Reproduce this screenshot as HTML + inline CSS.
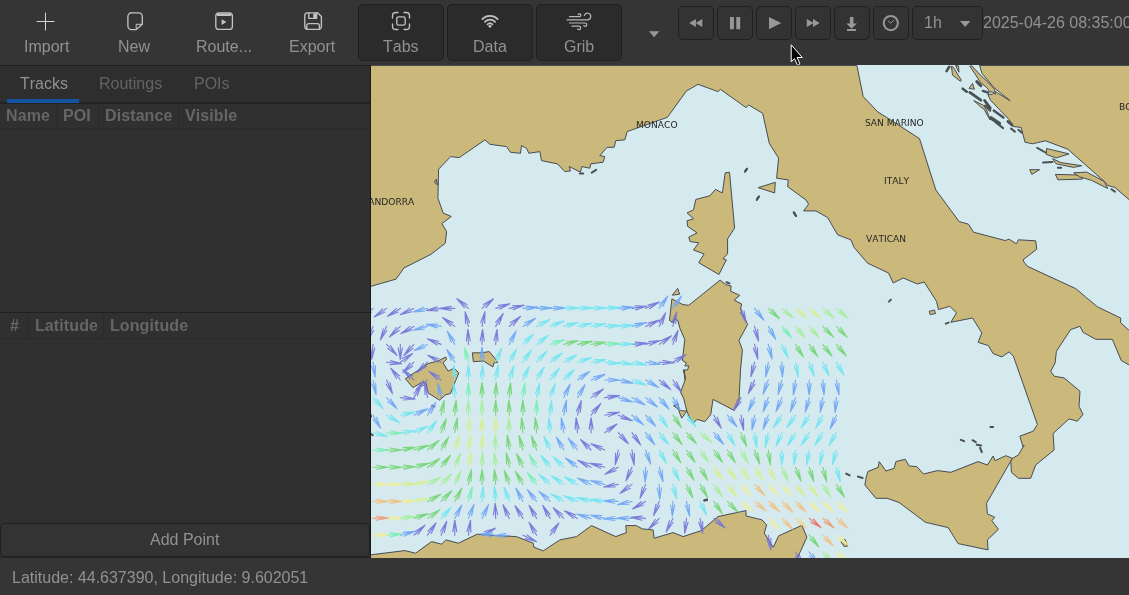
<!DOCTYPE html>
<html><head><meta charset="utf-8">
<style>
*{box-sizing:border-box;margin:0;padding:0}
html,body{width:1129px;height:595px;overflow:hidden;background:#353535}
body{font-kerning:none;font-family:"Liberation Sans",sans-serif;font-size:16px;color:#919190;position:relative}
.abs{position:absolute}
#hdr{left:0;top:0;width:1129px;height:65px;background:#353535}
#hdrline{left:0;top:65px;width:371px;height:1px;background:#202020}
.tb{position:absolute;top:0;height:65px;text-align:center}
.tb svg{position:absolute;top:13px;left:50%;margin-left:-8px}
.lbl{will-change:transform;position:absolute;white-space:nowrap;line-height:18px;height:18px;margin-top:1px}
.tog{position:absolute;top:4px;height:57px;width:86px;background:#2b2b2b;border:1px solid #202020;border-radius:5px}
.sb{position:absolute;top:6px;height:34px;width:36px;background:#333333;border:1px solid #202020;border-radius:5px}
#side{left:0;top:66px;width:370px;height:492px;background:#303030}
#nbh{left:0;top:66px;width:370px;height:38px;background:#2e2e2e;border-bottom:2px solid #222}
.th{will-change:transform;position:absolute;font-weight:bold;color:#666;white-space:nowrap;line-height:18px;margin-top:1px;letter-spacing:0.1px}
.vsep{position:absolute;width:1px;background:#2b2b2b}
.hsep{position:absolute;height:1px;background:#2b2b2b}
#map{left:371px;top:65px;width:758px;height:493px;background:#d5eaee;overflow:hidden}
#status{left:0;top:558px;width:1129px;height:37px;background:#353535}
</style></head><body>
<div id="hdr" class="abs"></div>
<div id="hdrline" class="abs"></div>

<!-- toolbar text buttons -->
<div class="lbl" style="left:24px;top:37px">Import</div>
<div class="lbl" style="left:118px;top:37px">New</div>
<div class="lbl" style="left:196px;top:37px">Route...</div>
<div class="lbl" style="left:289px;top:37px">Export</div>

<div class="tog" style="left:358px"></div>
<div class="tog" style="left:447px"></div>
<div class="tog" style="left:536px"></div>
<div class="lbl" style="left:383px;top:37px">Tabs</div>
<div class="lbl" style="left:473px;top:37px">Data</div>
<div class="lbl" style="left:564px;top:37px">Grib</div>

<div class="sb" style="left:678px"></div>
<div class="sb" style="left:717px"></div>
<div class="sb" style="left:756px"></div>
<div class="sb" style="left:795px"></div>
<div class="sb" style="left:834px"></div>
<div class="sb" style="left:873px"></div>
<div class="sb" style="left:912px;width:71px"></div>
<div class="lbl" style="left:924px;top:13px">1h</div>
<div class="lbl" style="left:983px;top:13px">2025-04-26 08:35:00</div>


<!-- icons -->
<svg class="abs" style="left:0;top:0" width="1129" height="66" viewBox="0 0 1129 66">
<g fill="none" stroke="#c2c2c2" stroke-width="1.35" stroke-linecap="round" stroke-linejoin="round">
<!-- plus -->
<path d="M37 21.5H54M45.5 13V30" stroke="#d6d6d6" stroke-width="1"/>
<!-- new -->
<path d="M131.5 12.8h7.2a3.6 3.6 0 0 1 3.6 3.6v7.8l-6 5.4h-4.8a3.6 3.6 0 0 1-3.6-3.6v-9.6a3.6 3.6 0 0 1 3.6-3.600z"/>
<path d="M136.2 29.3v-5h5.6" stroke-width="1"/>
<!-- route -->
<rect x="215.8" y="12.8" width="16.6" height="16.6" rx="3.2"/>
<path d="M217 14.7h14.200" stroke-width="2.6" stroke-linecap="butt"/>
<path d="M221.6 19.2l4.8 2.9-4.8 2.9z" fill="#c4c4c4" stroke="none"/>
<!-- save -->
<path d="M307.6 12.8h10l3.8 3.8v10.000a2.800 2.800 0 0 1-2.800 2.800h-11a2.800 2.800 0 0 1-2.800-2.800v-11a2.800 2.800 0 0 1 2.800-2.800z"/>
<path d="M308.800 13v5.400h7.800v-5.400M306.800 29.200v-3.600a2 2 0 0 1 2-2h8.600a2 2 0 0 1 2 2v3.600"/>
<path d="M313.300 13.400h2.700v4.600h-2.700z" fill="#c4c4c4" stroke="none"/>
<!-- tabs -->
<path d="M392.500 18v-2.200a3.300 3.300 0 0 1 3.300-3.300h2.200M404 12.500h2.200a3.300 3.300 0 0 1 3.300 3.300v2.200M409.500 24v2.200a3.300 3.300 0 0 1-3.300 3.300h-2.200M398 29.500h-2.200a3.300 3.300 0 0 1-3.300-3.300v-2.200"/>
<rect x="396.800" y="16.800" width="8.400" height="8.400" rx="1.800"/>
<!-- wifi -->
<path d="M482.300 19.100a11 11 0 0 1 15.400 0M484.900 21.800a7.300 7.300 0 0 1 10.200 0M487.500 24.400a3.600 3.600 0 0 1 5 0" stroke-width="1.750"/>
<circle cx="490" cy="26.300" r="1.450" fill="#c4c4c4" stroke="none"/>
<!-- wind -->
<g stroke="#b8b8b8" stroke-width="1.200">
<path d="M569.500 16.600h10a1.400 1.400 0 1 0-1.300-1.900"/>
<path d="M567 19.800h20.400a3.300 3.300 0 1 0-3.100-4.300"/>
<path d="M569.500 23h15.600a1.700 1.700 0 1 1-1.400 2.700"/>
<path d="M572 26.200h7a1.700 1.700 0 1 1-1.400 2.700"/>
</g>
</g>
<g fill="#989896">
<!-- dropdown -->
<path d="M649 31.200h10.300l-5.150 6z"/>
<!-- rewind -->
<path d="M689.200 23.100l6.700-4v8zM695.600 23.100l6.700-4v8z"/>
<!-- pause -->
<path d="M730 17h3.900v12.200h-3.900zM736.300 17h3.900v12.200h-3.900z"/>
<!-- play -->
<path d="M769 17l12.200 6.100-12.200 6.100z"/>
<!-- ff -->
<path d="M806.800 19.100l6.700 4-6.700 4zM813 19.100l6.700 4-6.700 4z"/>
<!-- download -->
<path d="M849.900 17h3.500v6.400h3.500l-5.250 5.400-5.250-5.400h3.500zM847 29.100h9v1.800h-9z"/>
<!-- combo arrow -->
<path d="M960 21h10.400l-5.200 6z"/>
</g>
<!-- clock -->
<circle cx="890.800" cy="23.100" r="7.100" fill="none" stroke="#989896" stroke-width="2"/>
<path d="M887.800 20.500l3 2.700 3.300-3.300" fill="none" stroke="#b0b0b0" stroke-width="0.800"/>
<!-- cursor -->
<path d="M791.200 44.800v17l3.300-3.200 2.600 5.600a1.300 1.300 0 0 0 2.500-1.100l-2.500-5.600h5.200z" fill="#000" stroke="#fff" stroke-width="1" stroke-linejoin="miter"/>
</svg>

<!-- sidebar -->
<div id="side" class="abs"></div>
<div id="nbh" class="abs"></div>
<div class="lbl" style="left:19.5px;top:74px;color:#919190">Tracks</div>
<div class="lbl" style="left:99px;top:74px;color:#646464">Routings</div>
<div class="lbl" style="left:194px;top:74px;color:#646464">POIs</div>
<div class="abs" style="left:7px;top:99px;width:72px;height:4px;background:#15539e"></div>

<div class="th" style="left:6px;top:106px">Name</div>
<div class="th" style="left:63px;top:106px">POI</div>
<div class="th" style="left:105px;top:106px">Distance</div>
<div class="th" style="left:185px;top:106px">Visible</div>
<div class="vsep" style="left:56px;top:103px;height:25px"></div>
<div class="vsep" style="left:98px;top:103px;height:25px"></div>
<div class="vsep" style="left:178px;top:103px;height:25px"></div>
<div class="hsep" style="left:0;top:128px;width:370px"></div>

<div class="abs" style="left:0;top:312px;width:370px;height:1px;background:#202020"></div>
<div class="th" style="left:10px;top:316px">#</div>
<div class="th" style="left:35px;top:316px">Latitude</div>
<div class="th" style="left:110px;top:316px">Longitude</div>
<div class="vsep" style="left:28px;top:313px;height:25px"></div>
<div class="vsep" style="left:103px;top:313px;height:25px"></div>
<div class="hsep" style="left:0;top:338px;width:370px"></div>

<div class="abs" style="left:0;top:523px;width:370px;height:34px;background:#333333;border:1px solid #202020;border-radius:5px"></div>
<div class="lbl" style="left:150px;top:530px">Add Point</div>
<div class="abs" style="left:0;top:557px;width:371px;height:1px;background:#222"></div>

<div class="abs" style="left:370px;top:66px;width:1px;height:492px;background:#1b1b1b"></div>

<!-- map -->
<div id="map" class="abs">
<svg id="mapsvg" width="758" height="493" viewBox="371 65 758 493">
<g fill="#cbb97b" stroke="#464c54" stroke-width="1" stroke-linejoin="round">
<path d="M366 287.7 L371 286.3 L396.1 279.1 L403.9 268 L431 254.3 L445.3 243.2 L446.6 231.5 L441.9 223.5 L451.3 216.5 L443.3 213.2 L437.9 198.2 L438.6 169.2 L450.6 156.6 L459.3 157.6 L484.9 139.9 L489.9 144.3 L506.5 146.6 L510.5 152.3 L520.5 153.3 L521.5 145.6 L526.5 148.3 L528.9 153.3 L539.8 151.6 L541.5 160.6 L557.5 163.9 L564.8 171.6 L570.5 170.9 L569.2 166.6 L580.5 172.2 L581.8 166.6 L589.8 168.2 L590.8 163.9 L603.1 162.2 L604.8 156.6 L599.8 155.6 L607.1 147.3 L614.1 147.3 L615.8 140.6 L624.8 139.9 L627.1 131.6 L667.4 117.3 L686.4 91 L698 84.3 L718 91.6 L720.4 89.3 L746 107.6 L748.7 105 L762.7 113.3 L769.3 143.3 L778.6 158.2 L776.6 178.2 L788.3 179.9 L787.6 186.6 L805.9 199.9 L808.6 204.2 L803.6 210.9 L815.9 210.9 L827.6 217.5 L837.6 234.8 L850.9 239.8 L854.2 247.5 L867.6 263.2 L888.5 273 L893.2 283 L903.2 278 L917.5 284 L924.2 282 L936.5 301.3 L938.5 309.6 L949.8 306.3 L956.5 313 L950.8 322.3 L972.5 318 L981.8 332.9 L978.1 342.3 L988.4 345.6 L993.1 353.6 L1001.8 356.9 L1009.1 351.9 L1013.4 356.2 L1037.4 424.5 L1033.1 431.2 L1019.8 436.2 L1023.1 446.8 L1024.1 445 L1018.4 455 L1012.4 458.3 L1010.8 461.6 L1011.4 472.3 L1018.4 478.3 L1030.7 478.3 L1035.7 465 L1054.1 450 L1054.1 449.5 L1053.1 433.5 L1057.4 429.5 L1069 418.9 L1077.4 421.2 L1083 414.5 L1079 406.2 L1080 391.2 L1064 377.9 L1054.1 376.2 L1050.7 371.2 L1055.1 362.9 L1056.4 351.3 L1070.7 329.6 L1080 326.3 L1083 332.3 L1095.7 339.3 L1112.3 339.3 L1121.3 360.6 L1129 364.9 L1145.6 372.9 L1145.6 334.6 L1129 330.3 L1120.5 322.6 L1120.8 318.1 L1097.4 306.8 L1085.7 297 L1075.7 288.6 L1027.4 266.3 L1024.1 262.2 L1023.1 259.8 L1036.7 249.2 L1035.7 240.8 L1018.4 239.8 L1016.4 243.8 L1009.1 239.2 L1005.1 240.5 L973.5 232.2 L968.5 224.2 L959.1 221.5 L935.8 189.9 L919.5 138.6 L891.2 120.3 L877.9 112 L863.2 96.6 L856.9 65.5 L366 65.5Z"/>
<path d="M979.6 65.5 L981.9 73.2 L993.7 87.4 L1010.2 100.8 L994.9 91.4 L992.5 94.4 L987.8 94.4 L990.6 100.3 L1009 119.6 L1013.7 126.6 L1021.2 127.4 L1025 142.2 L1032.5 143.8 L1045.5 140.8 L1067.8 149.2 L1105.5 182.6 L1107.8 185.5 L1114.9 187.4 L1129 199.6 L1133.7 203.8 L1135 205 L1135 65.5Z"/>
<path d="M366.7 555.2 L370 554.9 L405 550.6 L415.6 553.2 L431.6 541.6 L441.6 544.2 L445.9 539.9 L458.3 543.2 L477.2 534.2 L496.6 535.6 L516.5 536.6 L533.2 543.2 L533.9 547.2 L543.2 550.9 L559.8 539.9 L576.5 536.6 L591.5 525.6 L615.8 536.6 L626.4 532.6 L625.8 525.6 L636.4 525.6 L642.4 528.9 L653.1 529.9 L654.1 538.2 L673.1 532.6 L683.1 536.6 L701.4 530.6 L718 516.6 L746 510.6 L746 515.9 L762 519.9 L766.6 524.9 L764.3 533.2 L773.3 547.2 L778.6 535.9 L801.9 525.3 L806.9 537.2 L796.6 559.9 L746 559.9 L366 562Z"/>
<path d="M866.2 477.3 L867.9 471.6 L878.2 467.3 L879.2 461.6 L885.9 471 L894.2 468.3 L895.9 461.6 L905.2 459.3 L909.2 466 L916.8 466.6 L923.5 474 L937.5 470.6 L950.8 472.3 L978.1 461.6 L987.4 465 L993.1 456 L995.1 460.6 L1005.8 455.7 L1012.4 458.3 L986.5 503.3 L987.4 513.9 L994.8 517.3 L991.8 520.6 L998.4 529.3 L987.4 539.9 L988.1 549.9 L958.1 543.6 L948.2 527.6 L925.5 522.3 L899.2 502.6 L887.2 498.3 L875.9 498.3 L864.9 485Z"/>
<path d="M725.2 172.9 L729.5 172.2 L734.6 228.2 L727.6 238.8 L727.6 254 L722.9 258.7 L726.4 259.9 L718.9 274.5 L698.7 262.7 L704.1 254 L693.5 250 L698.7 242.8 L690 241.6 L688.8 237.1 L697 232.9 L687.6 226.3 L687.1 220.7 L693.5 218.8 L687.1 212.9 L693.5 209.8 L695.8 199.5 L710 195.7 L715.4 189.4 L722.4 192.9Z"/>
<path d="M758.2 187.7 L775.3 182.3 L774.6 192.9Z"/>
<path d="M720.1 280.1 L725.7 284.6 L731.1 286 L730.6 291.2 L739.8 295.4 L734.2 300.1 L741.7 304.1 L740.5 308.8 L747.6 324.5 L738.9 340.5 L742.4 349.9 L740.5 370 L738.9 401.7 L734.2 410.4 L713 399.4 L710.7 414.7 L704.8 421.7 L697 419.4 L693.5 422.9 L688.8 415.8 L686.9 411.1 L683.6 398.2 L680.6 392.3 L685.3 379.4 L684.1 370 L685.3 380 L683.4 369.9 L687.6 369.9 L688.8 365.9 L684.8 365.9 L686.4 362.9 L682.4 360.5 L684.8 339.4 L680.1 328.8 L677.7 320.1 L674.2 319.4 L673.5 322.9 L669.5 320.5 L671.9 298.9 L682.9 304.6 L688.8 305.3Z"/>
<path d="M672.3 295.2 L677.7 288.3 L679.6 294.2Z"/>
<path d="M673.5 405.7 L678.2 403.6 L678.7 409.5Z"/>
<path d="M686.9 411.1 L681.7 418.2 L678.7 410.4Z"/>
<path d="M405.4 378.7 L428.2 363.6 L438.8 360.6 L445.8 357 L446.5 359.4 L443 362.9 L448.2 371.1 L454.1 368.1 L458.8 372.8 L450.5 393.5 L445.8 394.7 L439.5 400.1 L428.2 393 L425.8 382.9 L422.3 382.2 L412.9 387.6Z"/>
<path d="M472.4 352.8 L481.6 352.8 L489.3 351.6 L496.4 360.1 L497.6 362.4 L494 362.9 L492.9 366.9 L483.4 361 L473.3 361.7Z"/>
<path d="M840.9 541.6 L844.9 539.2 L847.9 545.9 L844.2 546.6Z"/>
<path d="M929.2 311.3 L934.5 310 L935.5 313.6 L930.2 314.6Z"/>
<path d="M434.3 182.2 L436.3 179.2 L437.6 184.9Z"/>
<path d="M969.8 66.2 L971.8 65.8 L980.4 75.1 L987.4 81.6 L994.5 89.2 L995.5 94.3 L993 92.2 L989.4 91.7 L987.4 88.2 L980.4 82.2 L974.8 73.6Z"/>
<path d="M951.4 66.2 L953.1 67 L961.4 80.3 L960.6 81.4 L952.5 75.1Z"/>
<path d="M955.6 65.5 L958.5 65.8 L959 72.3 L957.2 69Z"/>
<path d="M969 88.5 L972.5 83.4 L974.4 89.2Z"/>
<path d="M973.8 100.6 L979.9 103.6 L983.6 105.4 L987 110.9 L990.1 119.8 L987.4 115.5 L984.4 109.6 L980.4 106.6Z"/>
<path d="M1046.6 148.5 L1069 153.9 L1056.1 157.9 L1046.2 154.4Z"/>
<path d="M1052.5 158.6 L1060.8 162.6 L1081.9 165.7 L1073.7 167.4 L1056.1 163.8Z"/>
<path d="M1029.7 169.7 L1039.6 169.7 L1031.8 174.4Z"/>
<path d="M1055.4 174.4 L1081.9 175.1 L1082.4 179.1 L1057.9 179.8Z"/>
<path d="M1073.7 172.8 L1086.6 172.1 L1104.3 181.5 L1107.8 188.5 L1091.4 180.3 L1079.6 176.8Z"/>
</g>
<g stroke="#4a4f52" stroke-width="2" stroke-linecap="round">
<path d="M996.1 122.6L1003.1 128.1"/>
<path d="M1007.8 121.5L1012.5 125.7"/>
<path d="M1010.9 128.5L1014.9 131.6"/>
<path d="M1018.4 129.7L1021.9 132.8"/>
<path d="M1037.2 147.8L1045.5 152.5"/>
<path d="M1043.1 162.6L1052.5 161.9"/>
<path d="M1057.9 167.8L1061.2 167.8"/>
<path d="M1111.4 189.2L1114.9 191.6"/>
<path d="M946.6 71.1L949.3 66.8" stroke-width="2.6"/>
<path d="M976.8 81.6L980.9 85.7" stroke-width="3"/>
<path d="M962.7 88.7L966.7 91.7" stroke-width="2.6"/>
<path d="M969.8 92.4L980.9 100.1" stroke-width="2.8"/>
<path d="M982.9 90.9L988.2 92.7" stroke-width="2.4"/>
<path d="M984.6 100.5L990.3 108.2" stroke-width="2.8"/>
<path d="M985.2 105.6L990.3 110.6" stroke-width="2.2"/>
<path d="M993.7 110.6L1003.4 117.5" stroke-width="2.4"/>
<path d="M991 118L999.3 123.5" stroke-width="3.6"/>
<path d="M1007.8 121.5L1011.6 124.5" stroke-width="2.6"/>
<path d="M757 199.2L758.7 196.9"/>
<path d="M794 212.5L796 215.9"/>
<path d="M745.3 170.9L747 168.9"/>
<path d="M888.9 301.6L890.9 299.6"/>
<path d="M945.8 323.6L948.5 322.6"/>
<path d="M990.4 426.9L993.1 426.9"/>
<path d="M960.8 439.8L964.1 441.2"/>
<path d="M972.5 440.2L975.8 442.2"/>
<path d="M976.8 444.8L981.1 445.5"/>
<path d="M980.1 447.8L981.8 452.2"/>
<path d="M745 171.8L746.9 168.7"/>
<path d="M756.7 200L758.9 196.4"/>
<path d="M793.7 212.4L796 216"/>
<path d="M726.4 282.3L729.5 283.4"/>
<path d="M579.8 173.6L583.1 173.6"/>
<path d="M591.8 172.6L596.1 169.9"/>
<path d="M432.2 405.7L434.5 406.4"/>
<path d="M704.4 500.3L707 500.3"/>
<path d="M846.2 473.6L849.6 475.3"/>
<path d="M857.9 476.6L862.6 478"/>
<path d="M370 412.9L371 416.9"/>
<path d="M370.7 433.8L372.7 435.2"/>
<path d="M704.3 500.5L706.9 499.3"/>
</g>
<g fill="none" stroke-width="1.15" stroke-linecap="round" opacity="0.9">
<path stroke="#7373d9" d="M373.0 308.4L361.2 317.6L368.9 309.0M361.2 317.6L371.4 312.2M373.0 326.4L367.9 340.5L369.9 329.1M367.9 340.5L373.7 330.5M373.0 344.4L371.7 359.3L370.7 347.8M371.7 359.3L374.7 348.1M386.6 308.4L374.3 317.0L382.5 308.8M374.3 317.0L384.9 312.1M386.6 326.4L380.3 340.0L383.3 328.8M380.3 340.0L386.9 330.5M386.6 344.4L396.9 355.4L387.6 348.4M396.9 355.4L390.5 345.6M386.6 362.2L401.6 363.6L390.0 364.6M401.6 363.6L390.4 360.6M386.6 380.0L392.5 393.8L386.2 384.1M392.5 393.8L389.9 382.5M400.3 308.4L387.5 316.3L396.2 308.6M387.5 316.3L398.3 312.0M400.3 326.4L389.5 336.9L396.3 327.5M389.5 336.9L399.1 330.4M400.3 344.4L400.3 359.4L398.2 348.0M400.3 359.4L402.3 348.0M400.3 362.2L412.5 353.6L404.3 361.8M412.5 353.6L402.0 358.5M400.3 380.0L390.8 368.3L399.6 376.0M390.8 368.3L396.4 378.5M400.3 397.6L415.2 399.0L403.6 400.0M415.2 399.0L404.0 396.0M413.9 308.4L400.3 314.7L409.8 308.1M400.3 314.7L411.5 311.7M413.9 326.4L400.8 333.7L409.8 326.4M400.8 333.7L411.7 329.9M413.9 344.4L403.9 355.5L410.0 345.7M403.9 355.5L413.0 348.4M413.9 362.2L402.9 372.5L409.9 363.2M402.9 372.5L412.6 366.2M413.9 380.0L402.9 369.8L412.6 376.1M402.9 369.8L409.9 379.0M413.9 397.6L421.4 384.7L417.4 395.6M421.4 384.7L413.9 393.5M413.9 535.2L425.0 525.2L417.9 534.4M425.0 525.2L415.2 531.4M427.5 362.2L416.7 372.7L423.5 363.3M416.7 372.7L426.3 366.2M427.5 380.0L416.0 389.6L423.5 380.8M416.0 389.6L426.1 383.8M427.5 397.6L424.7 382.9L428.8 393.8M424.7 382.9L424.9 394.5M427.5 535.2L436.1 523.0L431.2 533.5M436.1 523.0L427.9 531.2M441.1 308.4L426.3 310.5L437.3 306.9M426.3 310.5L437.9 310.9M441.1 344.4L427.2 338.8L438.6 341.2M427.2 338.8L437.1 344.9M441.1 362.2L427.8 355.4L438.9 358.8M427.8 355.4L437.0 362.4M441.1 380.0L428.9 371.4L439.4 376.3M428.9 371.4L437.1 379.6M441.1 535.2L446.8 521.3L444.4 532.7M446.8 521.3L440.6 531.2M454.8 308.4L439.8 308.4L451.2 306.4M439.8 308.4L451.2 310.4M454.8 326.4L442.6 317.6L453.1 322.7M442.6 317.6L450.7 326.0M454.8 535.2L454.8 520.2L456.8 531.7M454.8 520.2L452.8 531.7M468.4 308.4L456.9 298.8L467.0 304.6M456.9 298.8L464.4 307.6M468.4 326.4L465.0 311.8L469.6 322.5M465.0 311.8L465.6 323.4M468.4 344.4L467.9 329.4L470.3 340.8M467.9 329.4L466.3 340.9M468.4 535.2L470.5 520.4L470.9 532.0M470.5 520.4L466.9 531.4M482.0 308.4L493.5 298.8L486.1 307.6M493.5 298.8L483.5 304.6M482.0 326.4L484.9 311.7L484.7 323.3M484.9 311.7L480.7 322.6M482.0 344.4L482.6 329.4L484.2 340.9M482.6 329.4L480.2 340.8M482.0 535.2L495.3 528.2L486.1 535.3M495.3 528.2L484.3 531.8M495.7 308.4L509.9 303.8L499.7 309.2M509.9 303.8L498.4 305.4M495.7 326.4L503.2 313.5L499.2 324.4M503.2 313.5L495.7 322.3M495.7 344.4L497.0 329.5L498.0 341.0M497.0 329.5L494.0 340.7M495.7 518.4L495.1 503.4L497.6 514.8M495.1 503.4L493.5 514.9M509.3 308.4L524.0 305.3L513.2 309.6M524.0 305.3L512.4 305.7M509.3 326.4L520.4 316.4L513.3 325.6M520.4 316.4L510.6 322.6M509.3 518.4L503.0 504.8L509.6 514.3M503.0 504.8L506.0 516.0M522.9 518.4L515.0 505.7L522.7 514.3M515.0 505.7L519.3 516.4M522.9 535.2L536.5 541.6L525.3 538.6M536.5 541.6L527.0 534.9M536.6 518.4L529.1 505.4L536.5 514.3M529.1 505.4L533.0 516.3M536.6 535.2L529.1 522.3L536.5 531.1M529.1 522.3L533.0 533.2M550.2 518.4L542.7 505.4L550.1 514.3M542.7 505.4L546.7 516.3M550.2 535.2L558.8 523.0L553.9 533.5M558.8 523.0L550.6 531.2M563.8 518.4L553.2 507.8L562.7 514.4M553.2 507.8L559.9 517.3M577.5 415.2L581.3 400.7L580.3 412.3M581.3 400.7L576.4 411.2M577.5 432.7L576.1 417.7L579.1 428.9M576.1 417.7L575.1 429.3M577.5 518.4L564.5 510.9L575.4 514.9M564.5 510.9L573.3 518.4M591.1 397.6L603.4 389.0L595.2 397.2M603.4 389.0L592.9 393.9M591.1 415.2L600.7 403.7L594.9 413.8M600.7 403.7L591.8 411.2M591.1 432.7L591.1 417.7L593.1 429.1M591.1 417.7L589.1 429.1M591.1 450.0L580.5 439.4L590.0 446.0M580.5 439.4L587.1 448.9M591.1 467.2L577.8 460.2L588.9 463.8M577.8 460.2L587.0 467.3M604.7 397.6L619.6 395.6L608.5 399.1M619.6 395.6L608.0 395.2M604.7 415.2L619.4 412.3L608.6 416.5M619.4 412.3L607.8 412.5M604.7 432.7L617.0 424.0L608.8 432.2M617.0 424.0L606.5 428.9M604.7 450.0L591.1 443.7L602.3 446.7M591.1 443.7L600.6 450.3M604.7 467.2L590.2 463.4L601.8 464.4M590.2 463.4L600.7 468.3M618.3 415.2L632.2 420.8L620.9 418.4M632.2 420.8L622.4 414.7M618.3 432.7L628.4 443.8L619.2 436.7M628.4 443.8L622.2 434.0M618.3 450.0L615.2 464.7L615.6 453.1M615.2 464.7L619.6 453.9M618.3 467.2L605.0 474.1L614.2 467.1M605.0 474.1L616.1 470.7M618.3 484.4L603.6 487.0L614.5 483.0M603.6 487.0L615.2 487.0M632.0 308.4L646.8 306.3L635.8 309.9M646.8 306.3L635.2 305.9M632.0 344.4L646.9 343.1L635.7 346.1M646.9 343.1L635.4 342.1M632.0 432.7L640.6 444.9L632.4 436.7M640.6 444.9L635.7 434.4M632.0 450.0L634.1 464.9L630.5 453.8M634.1 464.9L634.5 453.3M632.0 467.2L625.9 481.0L628.7 469.7M625.9 481.0L632.4 471.3M632.0 484.4L620.0 493.4L627.9 484.9M620.0 493.4L630.3 488.2M645.6 308.4L659.2 302.1L649.7 308.7M659.2 302.1L648.0 305.1M645.6 326.4L659.2 320.1L649.7 326.8M659.2 320.1L648.0 323.1M645.6 344.4L660.1 340.5L649.6 345.4M660.1 340.5L648.5 341.5M645.6 484.4L640.0 498.3L642.4 487.0M640.0 498.3L646.1 488.5M645.6 501.4L632.6 508.9L641.5 501.5M632.6 508.9L643.5 505.0M645.6 518.4L630.6 517.4L642.2 516.1M630.6 517.4L641.9 520.2M659.2 326.4L665.6 312.9L662.6 324.1M665.6 312.9L658.9 322.4M659.2 344.4L671.5 335.8L663.3 344.0M671.5 335.8L661.0 340.7M659.2 362.2L674.2 362.8L662.7 364.4M674.2 362.8L662.9 360.4M659.2 380.0L670.7 389.6L660.7 383.8M670.7 389.6L663.3 380.8M659.2 501.4L653.6 515.4L656.0 504.0M653.6 515.4L659.8 505.5M659.2 518.4L648.6 529.0L655.3 519.5M648.6 529.0L658.1 522.4M672.9 326.4L676.7 312.0L675.7 323.5M676.7 312.0L671.8 322.5M672.9 344.4L678.0 330.3L676.0 341.7M678.0 330.3L672.2 340.4M672.9 362.2L685.9 354.8L677.0 362.2M685.9 354.8L674.9 358.7M672.9 380.0L681.5 392.3L673.3 384.1M681.5 392.3L676.6 381.8M672.9 518.4L666.1 531.8L669.4 520.7M666.1 531.8L673.0 522.5M686.5 518.4L684.7 533.3L684.1 521.7M684.7 533.3L688.1 522.2M700.1 518.4L702.7 533.2L698.8 522.3M702.7 533.2L702.7 521.6M713.8 415.2L721.2 428.2L713.8 419.3M721.2 428.2L717.3 417.3M713.8 518.4L725.2 528.0L715.2 522.2M725.2 528.0L717.8 519.2M741.0 308.4L746.1 322.5L740.3 312.4M746.1 322.5L744.1 311.1M741.0 397.6L733.5 410.6L737.5 399.7M733.5 410.6L741.0 401.8M741.0 415.2L743.6 430.0L739.6 419.1M743.6 430.0L743.6 418.4M754.6 326.4L758.5 340.9L753.6 330.4M758.5 340.9L757.5 329.4M754.6 344.4L757.8 359.1L753.4 348.3M757.8 359.1L757.4 347.5M754.6 362.2L750.8 376.7L751.8 365.2M750.8 376.7L755.7 366.2M754.6 380.0L748.3 393.6L751.3 382.4M748.3 393.6L755.0 384.1M768.3 535.2L770.9 550.0L766.9 539.1M770.9 550.0L770.9 538.4M795.5 552.0L803.0 565.0L795.6 556.1M803.0 565.0L799.1 554.1"/>
<path stroke="#6ea5f7" d="M373.0 362.2L375.1 377.1L371.5 366.1M375.1 377.1L375.5 365.5M373.0 380.0L376.1 394.7L371.8 383.9M376.1 394.7L375.7 383.1M373.0 415.2L380.5 428.2L373.0 419.3M380.5 428.2L376.5 417.3M386.6 397.6L396.9 408.6L387.6 401.6M396.9 408.6L390.5 398.9M400.3 535.2L414.7 531.4L404.2 536.3M414.7 531.4L403.2 532.4M413.9 415.2L427.5 408.9L418.0 415.5M427.5 408.9L416.3 411.9M427.5 308.4L413.0 312.0L423.6 307.3M413.0 312.0L424.5 311.2M427.5 326.4L413.0 330.3L423.5 325.4M413.0 330.3L424.6 329.3M427.5 344.4L413.9 350.7L423.4 344.1M413.9 350.7L425.1 347.7M427.5 415.2L435.7 402.6L431.2 413.3M435.7 402.6L427.8 411.1M441.1 326.4L426.3 324.4L437.9 324.0M426.3 324.4L437.3 327.9M441.1 397.6L437.8 383.0L442.3 393.7M437.8 383.0L438.4 394.6M454.8 344.4L447.3 331.4L454.7 340.3M447.3 331.4L451.2 342.3M454.8 362.2L446.8 349.5L454.6 358.1M446.8 349.5L451.2 360.3M454.8 518.4L461.8 505.2L458.2 516.2M461.8 505.2L454.7 514.3M468.4 518.4L474.0 504.5L471.6 515.8M474.0 504.5L467.9 514.3M482.0 362.2L482.0 347.2L484.1 358.7M482.0 347.2L480.0 358.7M482.0 518.4L488.4 504.8L485.4 516.0M488.4 504.8L481.7 514.3M495.7 535.2L480.7 533.9L492.3 532.9M480.7 533.9L491.9 536.9M509.3 344.4L516.1 331.0L512.7 342.1M516.1 331.0L509.1 340.3M509.3 535.2L494.3 535.8L505.7 533.4M494.3 535.8L505.8 537.4M522.9 308.4L537.9 307.1L526.7 310.1M537.9 307.1L526.3 306.1M522.9 326.4L535.5 318.3L527.0 326.2M535.5 318.3L524.8 322.8M522.9 501.4L515.9 488.2L523.0 497.3M515.9 488.2L519.5 499.2M536.6 308.4L551.6 307.9L540.2 310.3M551.6 307.9L540.1 306.3M536.6 501.4L527.3 489.6L535.9 497.4M527.3 489.6L532.8 499.9M550.2 308.4L565.2 307.9L553.8 310.3M565.2 307.9L553.7 306.3M550.2 501.4L539.0 491.4L548.9 497.6M539.0 491.4L546.2 500.6M563.8 397.6L570.2 384.1L567.2 395.3M570.2 384.1L563.5 393.6M563.8 415.2L566.4 400.4L566.4 412.0M566.4 400.4L562.5 411.3M563.8 432.7L561.2 417.9L565.2 428.8M561.2 417.9L561.2 429.5M563.8 450.0L556.3 437.0L563.8 445.9M556.3 437.0L560.3 447.9M577.5 380.0L589.7 371.4L581.5 379.6M589.7 371.4L579.2 376.3M577.5 397.6L585.0 384.7L581.0 395.6M585.0 384.7L577.5 393.5M577.5 450.0L568.2 438.2L576.8 445.9M568.2 438.2L573.7 448.4M577.5 467.2L565.6 458.0L575.9 463.5M565.6 458.0L573.4 466.6M591.1 380.0L605.0 374.4L595.2 380.5M605.0 374.4L593.6 376.8M591.1 484.4L577.5 478.1L588.7 481.1M577.5 478.1L587.0 484.7M591.1 518.4L576.7 514.0L588.2 515.4M576.7 514.0L587.1 519.3M604.7 380.0L619.7 380.0L608.3 382.0M619.7 380.0L608.3 378.0M604.7 484.4L590.2 480.5L601.8 481.5M590.2 480.5L600.7 485.4M604.7 518.4L590.1 515.0L601.7 515.6M590.1 515.0L600.8 519.6M618.3 308.4L633.3 307.1L622.1 310.1M633.3 307.1L621.7 306.1M618.3 380.0L633.0 383.1L621.4 382.7M633.0 383.1L622.3 378.8M618.3 397.6L632.7 402.0L621.2 400.6M632.7 402.0L622.3 396.8M618.3 501.4L603.3 500.9L614.8 499.3M603.3 500.9L614.7 503.3M618.3 518.4L603.3 518.9L614.7 516.5M603.3 518.9L614.8 520.5M632.0 326.4L646.5 322.6L635.9 327.5M646.5 322.6L634.9 323.6M632.0 397.6L645.1 404.9L634.1 401.1M645.1 404.9L636.1 397.6M632.0 415.2L643.5 424.8L633.4 419.0M643.5 424.8L636.0 416.0M632.0 501.4L617.4 504.8L628.0 500.3M617.4 504.8L628.9 504.2M632.0 518.4L617.0 518.1L628.4 516.3M617.0 518.1L628.4 520.4M645.6 362.2L660.5 364.3L648.9 364.7M660.5 364.3L649.4 360.8M645.6 380.0L658.6 387.5L647.7 383.5M658.6 387.5L649.7 380.0M645.6 397.6L657.4 406.9L647.2 401.4M657.4 406.9L649.7 398.3M645.6 415.2L655.8 426.2L646.6 419.2M655.8 426.2L649.5 416.4M645.6 432.7L654.6 444.6L646.1 436.7M654.6 444.6L649.4 434.3M645.6 450.0L650.7 464.1L644.9 454.0M650.7 464.1L648.7 452.7M645.6 467.2L645.1 482.2L643.5 470.8M645.1 482.2L647.5 470.9M659.2 308.4L667.8 296.1L662.9 306.6M667.8 296.1L659.6 304.3M659.2 397.6L668.9 409.1L660.0 401.7M668.9 409.1L663.1 399.1M659.2 467.2L663.1 481.7L658.2 471.2M663.1 481.7L662.1 470.2M659.2 484.4L659.8 499.4L657.3 488.0M659.8 499.4L661.4 487.9M672.9 308.4L681.5 296.1L676.6 306.6M681.5 296.1L673.3 304.3M672.9 397.6L680.4 410.6L672.9 401.8M680.4 410.6L676.4 399.7M672.9 501.4L672.3 516.4L670.7 505.0M672.3 516.4L674.7 505.1M686.5 501.4L689.6 516.1L685.3 505.4M689.6 516.1L689.2 504.5M713.8 432.7L723.4 444.1L714.5 436.7M723.4 444.1L717.6 434.1M727.4 415.2L737.0 426.7L728.1 419.2M737.0 426.7L731.2 416.6M754.6 308.4L763.9 320.2L755.3 312.5M763.9 320.2L758.4 310.0M754.6 397.6L748.3 411.2L751.3 400.0M748.3 411.2L755.0 401.7M754.6 415.2L752.0 430.0L752.0 418.4M752.0 430.0L756.0 419.1M768.3 326.4L775.8 339.4L768.3 330.6M775.8 339.4L771.8 328.5M768.3 344.4L772.2 358.9L767.2 348.4M772.2 358.9L771.1 347.3M768.3 362.2L765.7 377.0L765.7 365.4M765.7 377.0L769.6 366.1M768.3 380.0L763.1 394.1L765.2 382.7M763.1 394.1L768.9 384.0M768.3 397.6L763.1 411.7L765.2 400.3M763.1 411.7L768.9 401.7M768.3 415.2L763.1 429.3L765.2 417.9M763.1 429.3L768.9 419.2M781.9 362.2L782.4 377.2L780.0 365.9M782.4 377.2L784.0 365.8M781.9 380.0L778.0 394.5L779.0 382.9M778.0 394.5L782.9 384.0M781.9 397.6L776.0 411.5L778.6 400.2M776.0 411.5L782.4 401.7M795.5 380.0L793.4 394.9L793.0 383.3M793.4 394.9L797.0 383.8M795.5 397.6L790.4 411.7L792.4 400.3M790.4 411.7L796.2 401.7M809.2 380.0L809.2 395.0L807.1 383.6M809.2 395.0L811.2 383.6M809.2 397.6L805.3 412.1L806.3 400.6M805.3 412.1L810.2 401.6M809.2 552.0L817.8 564.3L809.6 556.1M817.8 564.3L812.9 553.8M822.8 380.0L824.1 394.9L821.1 383.7M824.1 394.9L825.1 383.4M822.8 397.6L820.2 412.4L820.2 400.8M820.2 412.4L824.2 401.5M836.4 380.0L839.0 394.8L835.1 383.9M839.0 394.8L839.0 383.2M836.4 397.6L835.1 412.6L834.1 401.0M835.1 412.6L838.1 401.4M836.4 415.2L830.1 428.8L833.1 417.6M830.1 428.8L836.7 419.3"/>
<path stroke="#6ee6f2" d="M373.0 397.6L383.2 408.6L374.0 401.6M383.2 408.6L376.9 398.9M373.0 432.7L387.5 436.5L375.9 435.5M387.5 436.5L377.0 431.6M386.6 415.2L399.6 422.7L388.7 418.7M399.6 422.7L390.7 415.2M400.3 415.2L414.9 412.1L404.2 416.4M414.9 412.1L403.3 412.5M400.3 432.7L415.1 430.8L404.1 434.2M415.1 430.8L403.6 430.2M413.9 432.7L427.5 426.3L418.0 433.0M427.5 426.3L416.3 429.3M427.5 432.7L436.5 420.7L431.3 431.0M436.5 420.7L428.1 428.6M441.1 518.4L451.2 507.3L445.0 517.1M451.2 507.3L442.0 514.4M454.8 380.0L453.5 365.1L456.5 376.3M453.5 365.1L452.5 376.6M454.8 397.6L453.5 382.7L456.5 393.9M453.5 382.7L452.5 394.3M468.4 380.0L468.4 365.0L470.4 376.4M468.4 365.0L466.4 376.4M482.0 380.0L482.6 365.0L484.2 376.5M482.6 365.0L480.2 376.4M482.0 501.4L483.3 486.5L484.4 498.1M483.3 486.5L480.3 497.7M495.7 362.2L501.5 348.4L498.9 359.7M501.5 348.4L495.2 358.2M495.7 380.0L498.3 365.2L498.3 376.8M498.3 365.2L494.3 376.1M495.7 501.4L494.4 486.5L497.4 497.7M494.4 486.5L493.4 498.1M509.3 362.2L516.6 349.1L512.8 360.1M516.6 349.1L509.3 358.1M509.3 380.0L513.9 365.7L512.3 377.2M513.9 365.7L508.5 376.0M509.3 501.4L504.2 487.4L510.0 497.4M504.2 487.4L506.2 498.8M522.9 344.4L533.7 334.0L526.9 343.4M533.7 334.0L524.1 340.5M522.9 362.2L531.5 350.0L526.6 360.5M531.5 350.0L523.3 358.2M522.9 380.0L529.3 366.4L526.3 377.6M529.3 366.4L522.6 375.9M536.6 326.4L549.9 319.6L540.7 326.6M549.9 319.6L538.8 323.0M536.6 344.4L548.4 335.2L540.6 343.8M548.4 335.2L538.1 340.6M536.6 362.2L546.8 351.3L540.5 361.0M546.8 351.3L537.5 358.3M536.6 380.0L544.1 367.0L540.1 377.9M544.1 367.0L536.6 375.9M536.6 397.6L539.7 383.0L539.3 394.6M539.7 383.0L535.3 393.7M550.2 326.4L564.2 321.1L554.3 327.0M564.2 321.1L552.8 323.3M550.2 362.2L562.0 353.0L554.2 361.6M562.0 353.0L551.8 358.5M550.2 380.0L559.4 368.2L554.0 378.4M559.4 368.2L550.8 375.9M550.2 397.6L555.3 383.6L553.3 395.0M555.3 383.6L549.5 393.6M550.2 415.2L551.5 400.3L552.5 411.8M551.5 400.3L548.5 411.5M550.2 432.7L548.9 417.7L551.9 428.9M548.9 417.7L547.9 429.3M550.2 450.0L543.9 436.4L550.5 445.9M543.9 436.4L546.9 447.6M550.2 467.2L541.0 455.4L549.6 463.2M541.0 455.4L546.4 465.7M550.2 484.4L539.0 474.4L548.9 480.5M539.0 474.4L546.2 483.5M563.8 308.4L578.8 307.9L567.5 310.3M578.8 307.9L567.3 306.3M563.8 326.4L578.3 322.6L567.8 327.5M578.3 322.6L566.8 323.6M563.8 362.2L576.8 354.8L567.9 362.2M576.8 354.8L565.9 358.7M563.8 380.0L574.4 369.4L567.8 378.9M574.4 369.4L564.9 376.0M563.8 467.2L553.2 456.6L562.7 463.3M553.2 456.6L559.9 466.1M563.8 484.4L551.5 475.8L562.0 480.7M551.5 475.8L559.7 484.0M563.8 501.4L550.8 493.9L561.7 497.9M550.8 493.9L559.7 501.4M577.5 308.4L592.4 307.9L581.1 310.3M592.4 307.9L581.0 306.3M577.5 326.4L592.1 323.3L581.4 327.7M592.1 323.3L580.5 323.7M577.5 362.2L591.7 357.6L581.5 363.1M591.7 357.6L580.2 359.2M577.5 484.4L564.5 476.9L575.4 480.9M564.5 476.9L573.3 484.4M577.5 501.4L563.6 495.6L574.9 498.2M563.6 495.6L573.4 501.9M591.1 308.4L606.1 307.9L594.7 310.3M606.1 307.9L594.6 306.3M591.1 326.4L605.9 323.8L595.0 327.8M605.9 323.8L594.3 323.8M591.1 362.2L605.9 359.6L595.0 363.6M605.9 359.6L594.3 359.6M591.1 501.4L576.6 497.6L588.1 498.6M576.6 497.6L587.1 502.5M604.7 308.4L619.7 307.4L608.4 310.2M619.7 307.4L608.1 306.1M604.7 326.4L619.7 325.4L608.4 328.2M619.7 325.4L608.1 324.2M604.7 362.2L619.7 363.6L608.1 364.6M619.7 363.6L608.4 360.6M604.7 501.4L589.9 499.4L601.4 499.0M589.9 499.4L600.9 502.9M618.3 326.4L633.3 325.1L622.1 328.1M633.3 325.1L621.7 324.1M618.3 344.4L633.3 343.9L622.0 346.3M633.3 343.9L621.8 342.3M618.3 362.2L633.2 364.6L621.6 364.8M633.2 364.6L622.2 360.8M632.0 362.2L646.7 364.9L635.1 364.9M646.7 364.9L635.8 360.9M632.0 380.0L646.1 385.1L634.6 383.1M646.1 385.1L636.0 379.3M659.2 415.2L667.8 427.5L659.6 419.3M667.8 427.5L662.9 417.0M659.2 432.7L668.5 444.5L659.8 436.7M668.5 444.5L663.0 434.2M659.2 450.0L666.3 463.2L659.1 454.1M666.3 463.2L662.7 452.2M672.9 467.2L679.2 480.8L672.5 471.3M679.2 480.8L676.2 469.6M672.9 484.4L676.7 498.9L671.8 488.4M676.7 498.9L675.7 487.3M686.5 415.2L696.1 426.7L687.2 419.2M696.1 426.7L690.3 416.6M700.1 501.4L706.5 515.0L699.8 505.5M706.5 515.0L703.5 503.8M727.4 432.7L734.9 445.6L727.4 436.8M734.9 445.6L730.9 434.7M754.6 432.7L756.7 447.5L753.1 436.5M756.7 447.5L757.1 435.9M768.3 432.7L765.2 447.3L765.6 435.7M765.2 447.3L769.5 436.6M781.9 344.4L788.2 358.0L781.6 348.5M788.2 358.0L785.2 346.8M781.9 415.2L773.3 427.5L778.2 417.0M773.3 427.5L781.5 419.3M781.9 432.7L776.0 446.5L778.6 435.2M776.0 446.5L782.4 436.7M781.9 450.0L781.9 465.0L779.9 453.6M781.9 465.0L783.9 453.6M795.5 362.2L798.1 377.0L794.2 366.1M798.1 377.0L798.1 365.4M795.5 415.2L786.9 427.5L791.8 417.0M786.9 427.5L795.1 419.3M795.5 432.7L787.6 445.4L791.9 434.6M787.6 445.4L795.3 436.8M795.5 450.0L794.0 464.9L793.2 453.3M794.0 464.9L797.2 453.8M809.2 362.2L814.3 376.3L808.5 366.3M814.3 376.3L812.3 364.9M809.2 415.2L801.2 427.9L805.6 417.2M801.2 427.9L809.0 419.3M809.2 432.7L801.2 445.4L805.6 434.6M801.2 445.4L809.0 436.8M809.2 450.0L806.6 464.8L806.6 453.2M806.6 464.8L810.5 453.9M822.8 362.2L829.1 375.8L822.5 366.3M829.1 375.8L826.1 364.6M822.8 415.2L815.7 428.4L819.3 417.4M815.7 428.4L822.9 419.3M822.8 432.7L814.8 445.4L819.2 434.6M814.8 445.4L822.6 436.8M822.8 450.0L819.7 464.7L820.1 453.1M819.7 464.7L824.0 453.9M836.4 362.2L843.9 375.2L836.5 366.4M843.9 375.2L840.0 364.3M836.4 432.7L828.9 445.6L832.9 434.7M828.9 445.6L836.4 436.8M836.4 450.0L832.5 464.5L833.5 452.9M832.5 464.5L837.4 454.0M836.4 467.2L840.3 481.7L835.4 471.2M840.3 481.7L839.3 470.2"/>
<path stroke="#76f0b4" d="M373.0 450.0L388.0 450.0L376.6 452.0M388.0 450.0L376.6 448.0M386.6 432.7L401.6 433.4L390.1 434.8M401.6 433.4L390.3 430.8M386.6 535.2L401.6 533.9L390.4 536.9M401.6 533.9L390.0 532.9M468.4 362.2L464.5 347.8L469.4 358.3M464.5 347.8L465.5 359.3M468.4 397.6L468.4 382.6L470.4 394.1M468.4 382.6L466.4 394.1M468.4 501.4L472.3 487.0L471.3 498.5M472.3 487.0L467.4 497.5M522.9 397.6L525.0 382.8L525.4 394.4M525.0 382.8L521.4 393.8M536.6 415.2L536.6 400.2L538.6 411.6M536.6 400.2L534.5 411.6M536.6 467.2L529.1 454.3L536.5 463.1M529.1 454.3L533.0 465.2M536.6 484.4L527.3 472.6L535.9 480.3M527.3 472.6L532.8 482.8M550.2 344.4L564.5 339.8L554.2 345.2M564.5 339.8L553.0 341.4M604.7 344.4L619.7 343.4L608.4 346.2M619.7 343.4L608.1 342.1M781.9 326.4L791.5 337.9L782.7 330.5M791.5 337.9L785.7 327.9"/>
<path stroke="#72d672" d="M373.0 467.2L388.0 467.2L376.6 469.3M388.0 467.2L376.6 465.2M386.6 450.0L401.6 450.0L390.2 452.0M401.6 450.0L390.2 448.0M386.6 467.2L401.6 467.2L390.2 469.3M401.6 467.2L390.2 465.2M400.3 450.0L415.0 447.4L404.1 451.4M415.0 447.4L403.4 447.4M400.3 467.2L415.3 466.7L403.9 469.1M415.3 466.7L403.8 465.1M413.9 450.0L428.2 445.4L417.9 450.8M428.2 445.4L416.7 447.0M413.9 467.2L428.4 463.4L417.9 468.3M428.4 463.4L416.8 464.4M413.9 518.4L428.2 513.8L417.9 519.2M428.2 513.8L416.7 515.4M427.5 450.0L439.0 440.4L431.6 449.2M439.0 440.4L429.0 446.2M427.5 467.2L439.8 458.6L431.6 466.8M439.8 458.6L429.3 463.5M427.5 501.4L440.8 494.4L431.6 501.5M440.8 494.4L429.7 498.0M427.5 518.4L439.8 509.8L431.6 518.0M439.8 509.8L429.3 514.7M441.1 415.2L444.3 400.5L443.9 412.1M444.3 400.5L439.9 411.3M441.1 432.7L446.3 418.6L444.3 430.0M446.3 418.6L440.5 428.6M441.1 450.0L448.6 437.0L444.7 447.9M448.6 437.0L441.2 445.9M441.1 467.2L450.4 455.4L444.9 465.7M450.4 455.4L441.8 463.2M441.1 501.4L451.8 490.8L445.1 500.3M451.8 490.8L442.3 497.5M454.8 415.2L456.1 400.3L457.1 411.8M456.1 400.3L453.1 411.5M454.8 432.7L457.4 417.9L457.4 429.5M457.4 417.9L453.4 428.8M454.8 501.4L461.8 488.2L458.2 499.2M461.8 488.2L454.7 497.3M468.4 484.4L471.5 469.7L471.1 481.3M471.5 469.7L467.2 480.5M482.0 397.6L482.0 382.6L484.1 394.1M482.0 382.6L480.0 394.1M482.0 484.4L482.0 469.4L484.1 480.8M482.0 469.4L480.0 480.8M495.7 397.6L496.2 382.7L497.8 394.1M496.2 382.7L493.8 394.0M495.7 415.2L495.7 400.2L497.7 411.6M495.7 400.2L493.7 411.6M495.7 484.4L494.4 469.5L497.4 480.7M494.4 469.5L493.4 481.0M509.3 397.6L510.6 382.7L511.6 394.3M510.6 382.7L507.6 393.9M509.3 415.2L508.8 400.2L511.2 411.6M508.8 400.2L507.2 411.7M509.3 450.0L507.2 435.1L510.8 446.2M507.2 435.1L506.8 446.7M509.3 467.2L506.2 452.6L510.5 463.3M506.2 452.6L506.6 464.2M509.3 484.4L504.2 470.3L510.0 480.4M504.2 470.3L506.2 481.7M522.9 415.2L522.9 400.2L524.9 411.6M522.9 400.2L520.9 411.6M522.9 432.7L521.6 417.7L524.6 428.9M521.6 417.7L520.6 429.3M522.9 450.0L519.0 435.5L524.0 446.0M519.0 435.5L520.1 447.1M522.9 467.2L516.6 453.7L523.2 463.2M516.6 453.7L519.6 464.9M522.9 484.4L515.4 471.4L522.9 480.3M515.4 471.4L519.4 482.3M536.6 432.7L535.3 417.7L538.3 428.9M535.3 417.7L534.2 429.3M536.6 450.0L531.4 435.9L537.2 446.0M531.4 435.9L533.4 447.3M563.8 344.4L578.3 340.5L567.8 345.4M578.3 340.5L566.8 341.5M577.5 344.4L592.1 341.3L581.4 345.6M592.1 341.3L580.5 341.7M591.1 344.4L605.9 342.3L594.9 345.9M605.9 342.3L594.3 341.9M672.9 415.2L681.5 427.5L673.3 419.3M681.5 427.5L676.6 417.0M672.9 432.7L682.1 444.5L673.5 436.7M682.1 444.5L676.6 434.2M672.9 450.0L680.8 462.7L673.0 454.1M680.8 462.7L676.5 452.0M686.5 432.7L696.5 443.8L687.4 436.7M696.5 443.8L690.4 434.0M686.5 450.0L695.1 462.3L686.9 454.1M695.1 462.3L690.2 451.8M686.5 467.2L694.0 480.2L686.5 471.4M694.0 480.2L690.0 469.3M686.5 484.4L692.8 498.0L686.2 488.5M692.8 498.0L689.8 486.8M700.1 467.2L707.6 480.2L700.2 471.4M707.6 480.2L703.7 469.3M700.1 484.4L707.6 497.4L700.2 488.5M707.6 497.4L703.7 486.5M713.8 450.0L722.4 462.3L714.2 454.1M722.4 462.3L717.5 451.8M713.8 501.4L722.4 513.7L714.2 505.5M722.4 513.7L717.5 503.2M727.4 450.0L735.3 462.7L727.6 454.1M735.3 462.7L731.0 452.0M727.4 501.4L738.0 512.1L728.5 505.4M738.0 512.1L731.3 502.6M741.0 432.7L746.6 446.6L740.5 436.7M746.6 446.6L744.2 435.2M754.6 450.0L759.8 464.1L754.0 454.0M759.8 464.1L757.8 452.7M768.3 308.4L779.4 318.4L769.6 312.3M779.4 318.4L772.3 309.3M768.3 450.0L770.4 464.9L766.8 453.8M770.4 464.9L770.8 453.3M795.5 344.4L803.5 357.1L795.7 348.5M803.5 357.1L799.1 346.4M795.5 467.2L801.1 481.2L795.0 471.3M801.1 481.2L798.7 469.8M809.2 344.4L817.8 356.7L809.6 348.5M817.8 356.7L812.9 346.2M809.2 467.2L813.8 481.5L808.3 471.3M813.8 481.5L812.2 470.0M809.2 535.2L818.8 546.7L809.9 539.3M818.8 546.7L813.0 536.7M822.8 326.4L833.4 337.1L823.9 330.4M833.4 337.1L826.7 327.6M822.8 344.4L832.0 356.2L823.4 348.5M832.0 356.2L826.6 346.0M822.8 467.2L826.7 481.7L821.8 471.2M826.7 481.7L825.7 470.2M836.4 326.4L847.0 337.1L837.5 330.4M847.0 337.1L840.4 327.6M836.4 344.4L846.1 355.9L837.2 348.4M846.1 355.9L840.3 345.8M836.4 484.4L844.4 497.1L836.6 488.5M844.4 497.1L840.0 486.4"/>
<path stroke="#f0ee9a" d="M373.0 484.4L388.0 484.4L376.6 486.4M388.0 484.4L376.6 482.4M373.0 535.2L388.0 534.7L376.6 537.1M388.0 534.7L376.5 533.1M386.6 484.4L401.6 484.4L390.2 486.4M401.6 484.4L390.2 482.4M386.6 518.4L401.6 517.9L390.3 520.3M401.6 517.9L390.1 516.3M400.3 501.4L415.3 500.9L403.9 503.3M415.3 500.9L403.8 499.3M741.0 484.4L750.7 495.9L741.8 488.4M750.7 495.9L744.9 485.8M741.0 501.4L752.5 511.1L742.5 505.3M752.5 511.1L745.0 502.2M768.3 484.4L778.3 495.5L769.2 488.4M778.3 495.5L772.2 485.7M768.3 518.4L778.9 529.0L769.4 522.4M778.9 529.0L772.2 519.5M781.9 484.4L791.5 495.9L782.7 488.4M791.5 495.9L785.7 485.8M809.2 501.4L819.6 512.2L810.2 505.4M819.6 512.2L813.1 502.6M822.8 501.4L833.2 512.2L823.8 505.4M833.2 512.2L826.7 502.6M836.4 501.4L847.2 511.9L837.6 505.4M847.2 511.9L840.4 502.5M836.4 535.2L847.9 544.9L837.9 539.1M847.9 544.9L840.5 536.0M836.4 552.0L847.6 562.0L837.7 555.9M847.6 562.0L840.4 552.9"/>
<path stroke="#f2c07e" d="M373.0 501.4L388.0 501.4L376.6 503.5M388.0 501.4L376.6 499.4M386.6 501.4L401.6 501.4L390.2 503.5M401.6 501.4L390.2 499.4M754.6 484.4L764.7 495.5L755.5 488.4M764.7 495.5L758.5 485.7M754.6 501.4L766.1 511.1L756.1 505.3M766.1 511.1L758.7 502.2M768.3 501.4L779.4 511.5L769.6 505.3M779.4 511.5L772.3 502.3M781.9 501.4L792.7 511.9L783.1 505.4M792.7 511.9L785.9 502.5M781.9 518.4L792.5 529.0L783.0 522.4M792.5 529.0L785.9 519.5M795.5 501.4L805.9 512.2L796.6 505.4M805.9 512.2L799.5 502.6M822.8 535.2L833.4 545.9L823.9 539.2M833.4 545.9L826.7 536.4M836.4 518.4L847.9 528.0L837.9 522.2M847.9 528.0L840.5 519.2"/>
<path stroke="#f09a70" d="M373.0 518.4L388.0 517.9L376.6 520.3M388.0 517.9L376.5 516.3M822.8 518.4L834.3 528.0L824.2 522.2M834.3 528.0L826.8 519.2"/>
<path stroke="#d6f08e" d="M400.3 484.4L415.3 483.9L403.9 486.3M415.3 483.9L403.8 482.3M413.9 484.4L428.6 481.3L417.8 485.6M428.6 481.3L417.0 481.7M413.9 501.4L428.6 498.3L417.8 502.7M428.6 498.3L417.0 498.7M454.8 450.0L459.4 435.7L457.8 447.2M459.4 435.7L454.0 446.0M468.4 432.7L469.7 417.7L470.7 429.3M469.7 417.7L466.7 428.9M468.4 450.0L470.5 435.1L470.9 446.7M470.5 435.1L466.9 446.2M468.4 467.2L471.0 452.5L471.0 464.1M471.0 452.5L467.0 463.4M482.0 432.7L482.0 417.7L484.1 429.1M482.0 417.7L480.0 429.1M482.0 450.0L482.6 435.0L484.2 446.5M482.6 435.0L480.2 446.4M495.7 432.7L495.7 417.7L497.7 429.1M495.7 417.7L493.7 429.1M713.8 467.2L722.4 479.5L714.2 471.3M722.4 479.5L717.5 469.0M727.4 467.2L736.0 479.5L727.8 471.3M736.0 479.5L731.1 469.0M727.4 484.4L736.6 496.2L728.0 488.5M736.6 496.2L731.2 486.0M741.0 467.2L749.0 480.0L741.2 471.4M749.0 480.0L744.6 469.2M754.6 467.2L762.6 480.0L754.8 471.4M762.6 480.0L758.2 469.2M768.3 467.2L775.3 480.5L768.2 471.4M775.3 480.5L771.7 469.5M795.5 308.4L807.0 318.0L797.0 312.2M807.0 318.0L799.6 309.2M795.5 484.4L804.8 496.2L796.1 488.5M804.8 496.2L799.3 486.0M809.2 308.4L820.7 318.0L810.6 312.2M820.7 318.0L813.2 309.2M809.2 484.4L817.8 496.7L809.6 488.5M817.8 496.7L812.9 486.2"/>
<path stroke="#a4ee9a" d="M400.3 518.4L415.1 516.3L404.1 519.9M415.1 516.3L403.5 515.9M427.5 484.4L440.8 477.4L431.6 484.5M440.8 477.4L429.7 480.9M441.1 484.4L451.8 473.8L445.1 483.3M451.8 473.8L442.3 480.4M454.8 467.2L460.4 453.3L458.0 464.7M460.4 453.3L454.3 463.2M454.8 484.4L461.1 470.8L458.1 482.0M461.1 470.8L454.5 480.3M468.4 415.2L468.4 400.2L470.4 411.6M468.4 400.2L466.4 411.6M482.0 415.2L482.0 400.2L484.1 411.6M482.0 400.2L480.0 411.6M482.0 467.2L482.6 452.3L484.2 463.7M482.6 452.3L480.2 463.6M495.7 450.0L495.1 435.0L497.6 446.4M495.1 435.0L493.5 446.5M495.7 467.2L494.4 452.3L497.4 463.5M494.4 452.3L493.4 463.9M509.3 432.7L508.8 417.7L511.2 429.0M508.8 417.7L507.2 429.1M700.1 432.7L711.6 442.3L701.6 436.5M711.6 442.3L704.2 433.4M700.1 450.0L708.7 462.3L700.5 454.1M708.7 462.3L703.8 451.8M713.8 484.4L722.4 496.7L714.2 488.5M722.4 496.7L717.5 486.2M741.0 450.0L748.1 463.2L740.9 454.1M748.1 463.2L744.5 452.2M781.9 308.4L793.4 318.0L783.3 312.2M793.4 318.0L785.9 309.2M781.9 467.2L788.2 480.8L781.6 471.3M788.2 480.8L785.2 469.6M795.5 326.4L805.2 337.9L796.3 330.5M805.2 337.9L799.4 327.9M809.2 326.4L819.2 337.6L810.1 330.5M819.2 337.6L813.0 327.8M822.8 308.4L834.3 318.0L824.2 312.2M834.3 318.0L826.8 309.2M822.8 484.4L830.7 497.1L823.0 488.5M830.7 497.1L826.4 486.4M822.8 552.0L832.8 563.1L823.7 556.0M832.8 563.1L826.7 553.3M836.4 308.4L847.9 318.0L837.9 312.2M847.9 318.0L840.5 309.2"/>
<path stroke="#f1d78c" d="M795.5 518.4L807.0 528.0L797.0 522.2M807.0 528.0L799.6 519.2"/>
<path stroke="#ee6a6a" d="M809.2 518.4L821.0 527.6L810.7 522.2M821.0 527.6L813.2 519.0"/>
</g>
</svg>
<svg class="abs" style="left:0;top:0;will-change:transform" width="758" height="493" viewBox="371 65 758 493">
<g font-family="DejaVu Sans, sans-serif" font-size="9.1" fill="#262626" style="font-kerning:none">
<text x="636" y="128">MONACO</text>
<text x="368.3" y="205">ANDORRA</text>
<text x="865" y="126">SAN MARINO</text>
<text x="884" y="184">ITALY</text>
<text x="866" y="242">VATICAN</text>
<text x="1119" y="110">BOSNIA AND HERZEGOVINA</text>
</g>
</svg>
</div>

<div id="status" class="abs"></div>
<div class="lbl" style="left:12px;top:568px">Latitude: 44.637390, Longitude: 9.602051</div>
</body></html>
